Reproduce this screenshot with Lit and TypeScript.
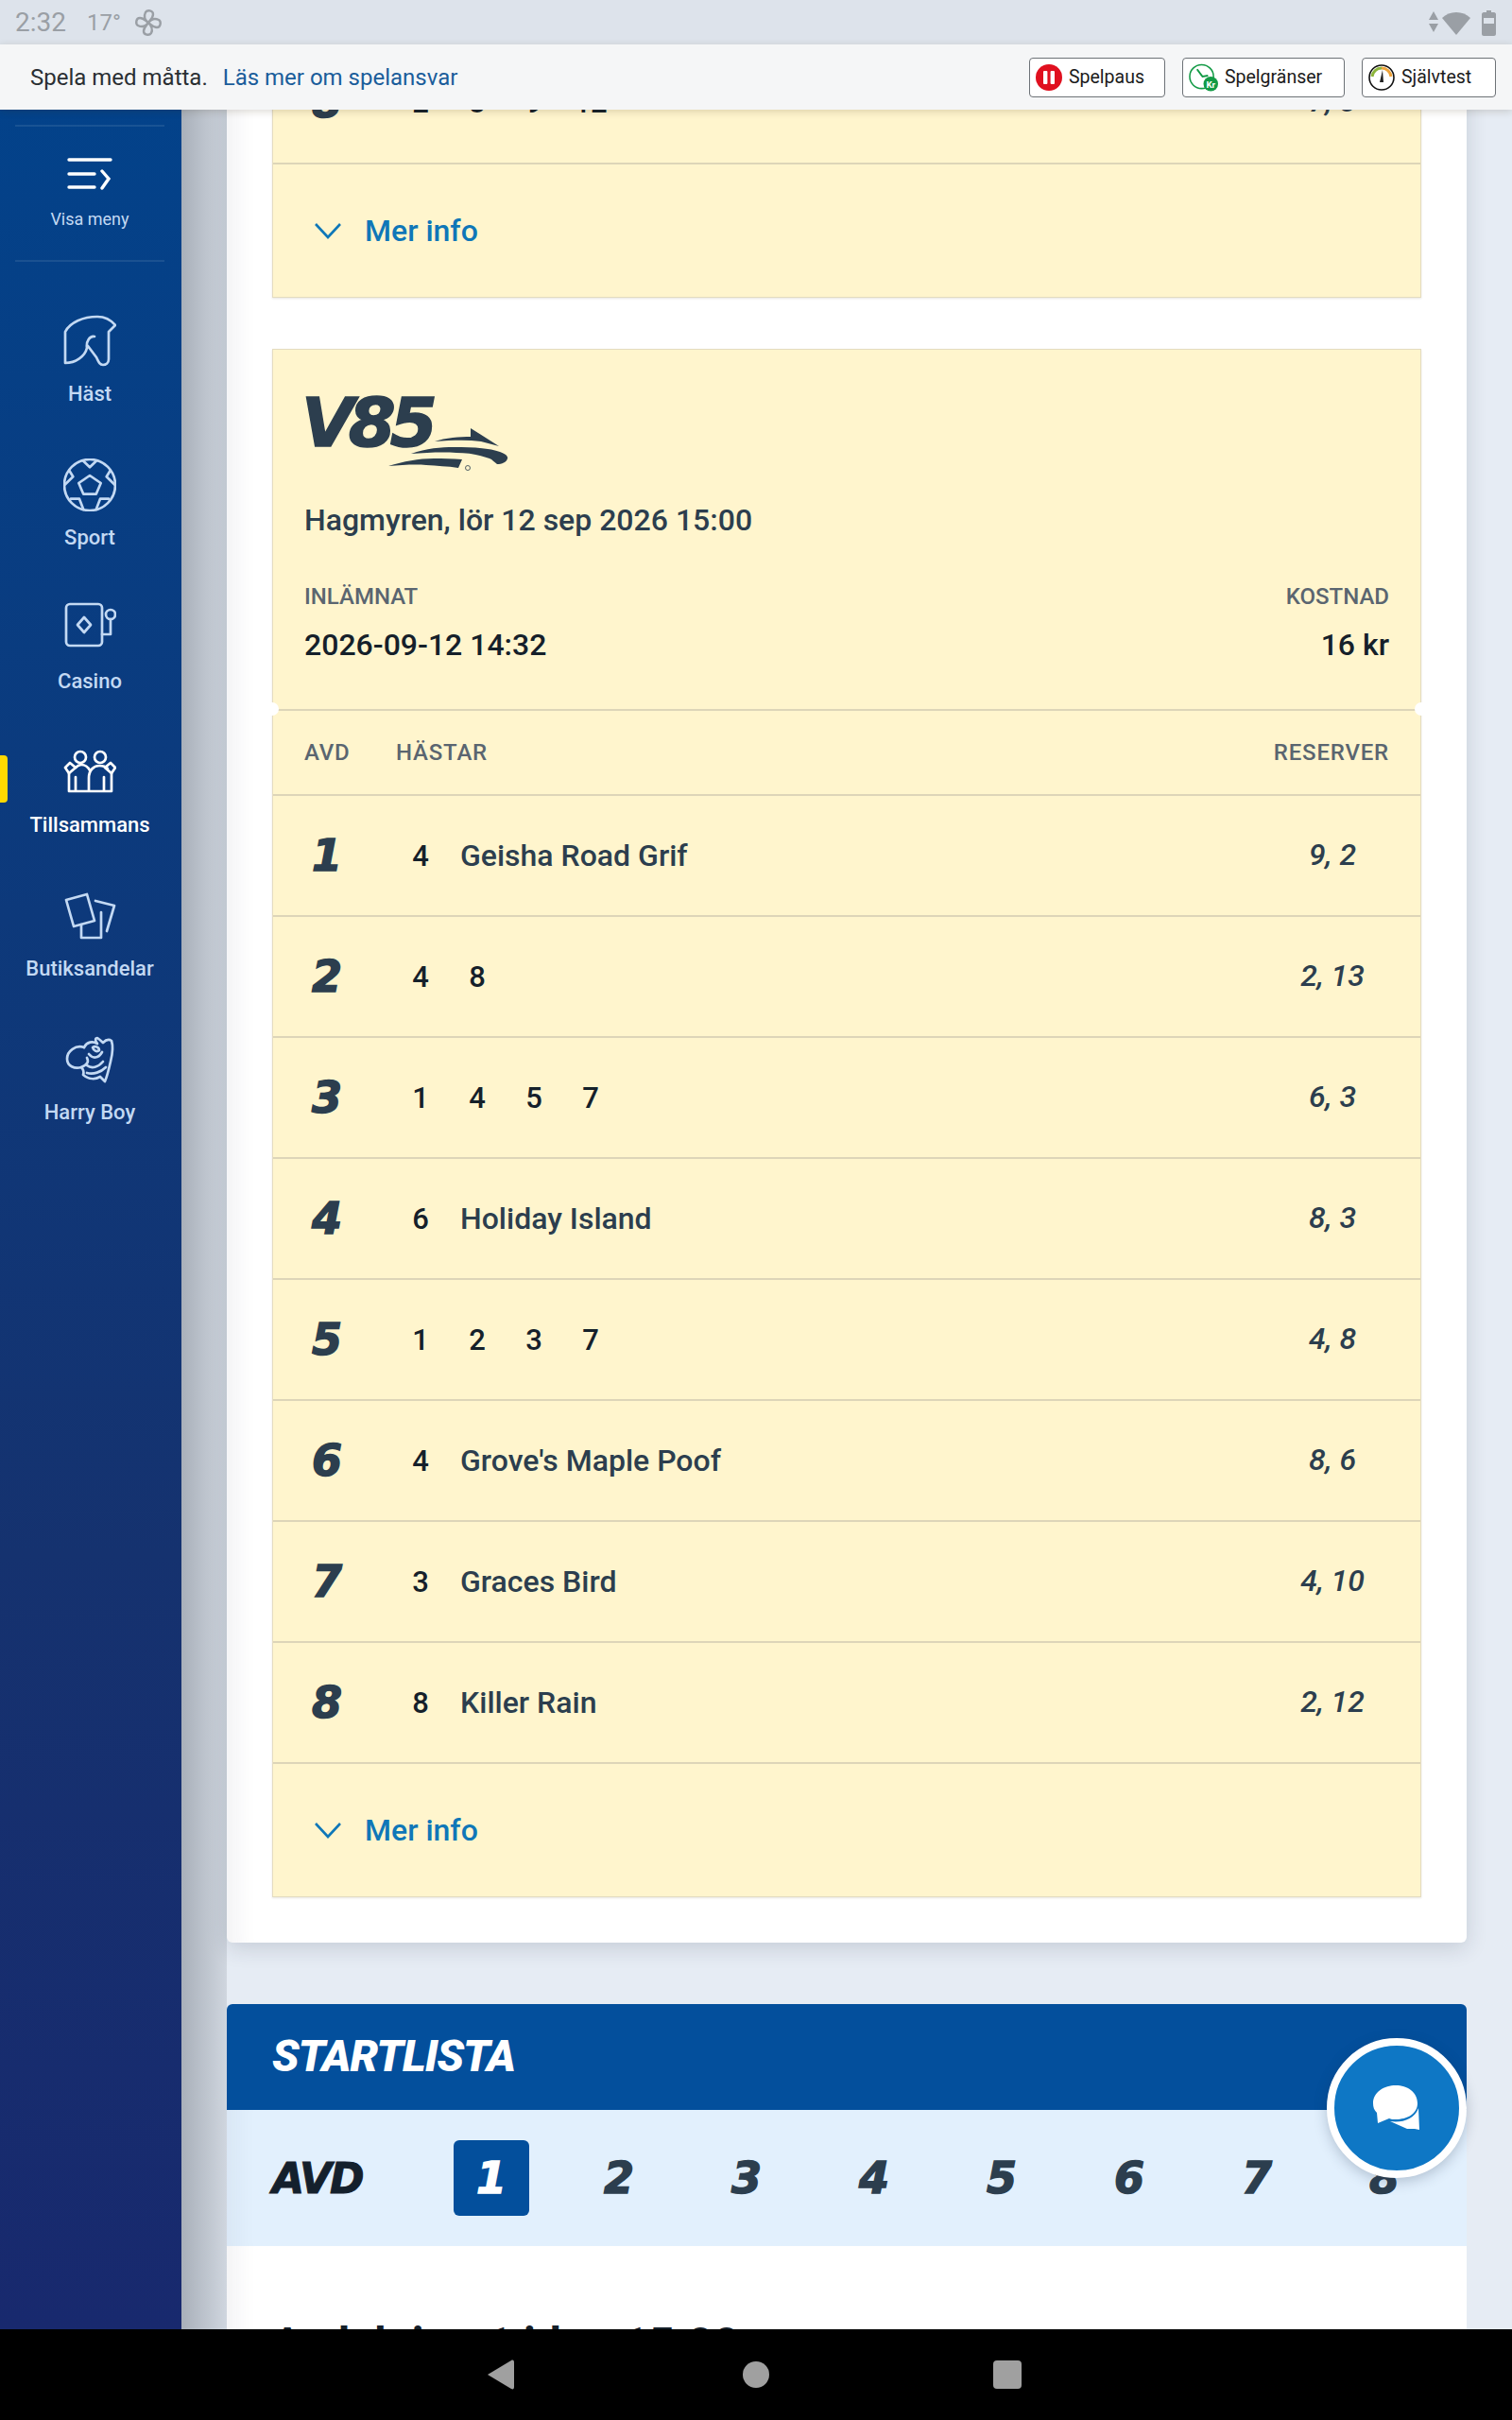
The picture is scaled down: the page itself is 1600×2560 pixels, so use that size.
import { LitElement, html, css, svg } from "lit";
import { customElement } from "lit/decorators.js";

type Row = { avd: number; nums: number[]; name: string; res: string };

const FIRST: Row[] = [{ avd: 8, nums: [2, 3, 9, 12], name: "", res: "7, 8" }];
const ROWS: Row[] = [
  { avd: 1, nums: [4], name: "Geisha Road Grif", res: "9, 2" },
  { avd: 2, nums: [4, 8], name: "", res: "2, 13" },
  { avd: 3, nums: [1, 4, 5, 7], name: "", res: "6, 3" },
  { avd: 4, nums: [6], name: "Holiday Island", res: "8, 3" },
  { avd: 5, nums: [1, 2, 3, 7], name: "", res: "4, 8" },
  { avd: 6, nums: [4], name: "Grove's Maple Poof", res: "8, 6" },
  { avd: 7, nums: [3], name: "Graces Bird", res: "4, 10" },
  { avd: 8, nums: [8], name: "Killer Rain", res: "2, 12" },
];

const ICONS: Record<string, unknown> = {
  hast: svg`<path d="M32 23C27 22 23 28 24 35C22 44 12 51 1 51V18C6 8 20 2 35 2C42 2 49 5 54 11L47 18V47C47 51 44 53 41 53C37 53 36 49 34 45L25 33"/>`,
  sport: svg`<circle cx="27" cy="28" r="27"/><path d="M27 18L38.7 26L33.7 37.7H20.3L15.3 26Z"/><path d="M20.3 2.7L27 9.3L33.7 2.7M5.3 12.7L9.3 19.3L0.6 27.7M48.7 12.7L44.7 19.3L53.4 27.7M7 42.7H16L20.3 54M47 42.7H38L33.7 54"/>`,
  casino: svg`<rect x="2" y="2" width="38" height="44" rx="4"/><path d="M21 16L28 24L21 32L14 24Z"/><circle cx="49" cy="13" r="5"/><path d="M49 18V34H40"/>`,
  team: svg`<circle cx="17" cy="12" r="6"/><circle cx="38" cy="12" r="6"/><path d="M5 29L1 23L6 18L12 23ZM50 29L54 23L49 18L43 23Z"/><path d="M5 29V48H50V29M12 33V48M42 33V48M26 48V34C26 26 31 21 37 21C42 21 44 22 46 24M12 23C14 21 16 20 18 20C22 20 25 22 27 26"/>`,
  butik: svg`<path d="M2 11L24 5L32 33L10 39Z"/><path d="M33 12L53 17L45 44"/><path d="M39 24V51H18V37"/>`,
  harry: svg`<path d="M21 15C12 12 3 19 3 27C3 35 11 38 18 36C25 33 26 30 24 26"/><path d="M21 15C24 9 30 8 35 11C32 7 33 5 35 5C38 7 40 9 41 10C44 7 47 6 50 8C52 14 51 22 49 30C47 38 46 44 43 51L38 46C33 49 26 49 20 44C21 41 21 39 18 36"/><path d="M26 22C30 27 36 27 40 20M30 15C33 13 37 15 37 18C35 20 31 19 30 15Z"/><path d="M24 34C29 38 36 36 41 30M24 42C31 44 39 41 44 36"/>`,
};

@customElement("app-root")
export class AppRoot extends LitElement {
  static styles = css`
    :host {
      display: block;
      position: relative;
      width: 1600px;
      height: 2560px;
      overflow: hidden;
      font-family: Roboto, "Liberation Sans", sans-serif;
      background: #e6ecf4;
      color: #2c3e4e;
    }
    .page { display: flex; flex-direction: column; height: 2560px; }
    .status {
      height: 47px; flex: none; background: #dde3eb; color: #9a9fa5;
      display: flex; align-items: center; padding: 0 17px 0 16px; font-size: 28px;
    }
    .status .time { width: 76px; }
    .status .temp { font-size: 24px; width: 50px; }
    .status .spacer { flex: 1; }
    .resp {
      height: 69px; flex: none; background: #f5f6f7; display: flex; align-items: center;
      padding: 0 17px 0 32px; font-size: 24px; color: #2a2f33; position: relative; z-index: 5;
      box-shadow: 0 2px 8px rgba(60, 50, 20, 0.18);
    }
    .resp a { color: #1a5d9b; margin-left: 16px; }
    .resp .spacer { flex: 1; }
    .btn {
      height: 42px; box-sizing: border-box; border: 1px solid #6d7277; border-radius: 4px; background: #fff;
      display: flex; align-items: center; font-size: 19.5px; color: #1b1b1b; margin-left: 18px; padding-left: 6px;
    }
    .btn svg { flex: none; margin-right: 7px; }
    .w1 { width: 144px; }
    .w2 { width: 172px; }
    .w3 { width: 142px; }
    .main { flex: 1; display: flex; min-height: 0; overflow: hidden; }
    .side {
      width: 192px; flex: none; position: relative; z-index: 3; box-sizing: border-box; padding-right: 2px;
      background: linear-gradient(#03428a, #15326f 65%, #18296e);
      display: flex; flex-direction: column; align-items: center;
    }
    .side::after {
      content: ""; position: absolute; left: 100%; top: 0; bottom: 0; width: 48px;
      background: linear-gradient(90deg, rgba(10, 20, 35, 0.28), rgba(10, 20, 35, 0.1));
    }
    .hr { width: 158px; height: 2px; background: rgba(255, 255, 255, 0.09); flex: none; }
    .hr.top { margin-top: 16px; }
    .menu {
      height: 141px; flex: none; display: flex; flex-direction: column; align-items: center;
      color: #c3d9f3; font-size: 18px;
    }
    .menu svg { margin-top: 33px; margin-bottom: 20px; }
    .nav { padding-top: 44px; width: 100%; }
    .item {
      height: 152px; box-sizing: border-box; padding-top: 12px; position: relative;
      display: flex; flex-direction: column; align-items: center; color: #c3d9f3;
      font-size: 22px; font-weight: 500; line-height: 28px; gap: 14px;
    }
    .item.on { color: #fff; }
    .item svg { fill: none; stroke: currentColor; stroke-width: 2.7; stroke-linecap: round; stroke-linejoin: round; }
    .mark {
      position: absolute; left: 0; top: 22px; width: 8px; height: 50px;
      background: #ffd900; border-radius: 0 4px 4px 0;
    }
    .content { flex: 1; padding: 0 48px; min-width: 0; }
    .panel {
      margin-top: -73px; background: #fff; border-radius: 6px; padding: 0 48px 48px;
      box-shadow: 0 6px 22px rgba(30, 45, 70, 0.16), inset 34px 0 24px -24px rgba(30, 40, 60, 0.06);
      display: flex; flex-direction: column; gap: 54px;
    }
    .card {
      background: #fff5cd; border: 1px solid #e4dcc0; position: relative;
      box-shadow: 0 1px 2px rgba(90, 80, 40, 0.14);
    }
    .head { height: 380px; box-sizing: border-box; padding: 48px 33px 0; }
    .logo { display: flex; height: 80px; position: relative; }
    .wordmark {
      font-family: "DejaVu Sans", sans-serif; font-weight: 700; font-style: italic;
      font-size: 72px; line-height: 58px; letter-spacing: -6px; color: #2c3e4e; margin-left: -3px;
      -webkit-text-stroke: 1.5px #2c3e4e;
    }
    .horse { position: absolute; left: 89px; top: 35px; }
    .date { font-size: 32px; line-height: 40px; margin-top: 32px; font-weight: 500; }
    .meta { display: flex; justify-content: space-between; margin-top: 44px; }
    .meta .r { text-align: right; }
    .lab { font-size: 24px; line-height: 34px; color: #5a6570; font-weight: 500; }
    .val { font-size: 32px; line-height: 40px; color: #15202a; margin-top: 14px; font-weight: 500; }
    .notch {
      position: absolute; top: 373px; width: 14px; height: 14px; border-radius: 50%; background: #fff;
    }
    .notch.l { left: -8px; }
    .notch.r { right: -8px; }
    .cols {
      height: 90px; border-top: 2px solid #ddd5b8; box-sizing: border-box; display: flex; align-items: center;
      padding: 0 33px; font-size: 24px; color: #5a6570; font-weight: 500; letter-spacing: 0.8px;
    }
    .cols .a { width: 97px; }
    .cols .b { flex: 1; }
    .row {
      height: 128px; box-sizing: border-box; border-top: 2px solid #ddd5b8; display: flex; align-items: center;
      padding: 0 33px;
    }
    .row.noline { border-top: none; }
    .avd {
      width: 93px; flex: none; font-family: "DejaVu Sans", sans-serif; font-weight: 700; font-style: italic;
      font-size: 46px; color: #2c3e4e; text-indent: 8px; -webkit-text-stroke: 1.5px #2c3e4e;
    }
    .nums { display: flex; flex: none; }
    .num { width: 60px; text-align: center; font-size: 31px; font-weight: 500; color: #15202a; }
    .name { font-size: 32px; margin-left: 12px; flex: 1; font-weight: 500; }
    .fill { flex: 1; }
    .res {
      width: 120px; flex: none; text-align: center; font-style: italic; font-size: 32px; font-weight: 500;
      color: #2c3e4e; padding-bottom: 2px;
    }
    .more {
      height: 142px; box-sizing: border-box; border-top: 2px solid #ddd5b8; display: flex; align-items: center;
      padding: 0 0 0 43px; color: #0f77b8; font-size: 32px; font-weight: 500; gap: 24px;
    }
    .start { margin-top: 65px; }
    .sthead {
      height: 112px; box-sizing: border-box; background: #034f9c; border-radius: 6px 6px 0 0; display: flex; align-items: center;
      padding: 0 0 4px 48px; color: #fff; font-weight: 900; font-style: italic; font-size: 47px; letter-spacing: -1px;
    }
    .tabs {
      height: 144px; background: #e2f0fd; display: flex; align-items: center; padding-left: 48px; position: relative;
      font-family: "DejaVu Sans", sans-serif; font-weight: 700; font-style: italic; color: #2c3e4e;
      box-shadow: inset 34px 0 24px -24px rgba(30, 40, 60, 0.05);
    }
    .tabs .t { font-size: 44px; color: #14202c; width: 192px; letter-spacing: -2px; flex: none; -webkit-text-stroke: 1px #14202c; }
    .tab {
      width: 80px; height: 80px; flex: none; margin-right: 55px; display: flex; align-items: center; justify-content: center;
      font-size: 46px; border-radius: 6px; -webkit-text-stroke: 1.5px currentColor;
    }
    .tab.on { background: #034f9c; color: #fff; }
    .body {
      background: #fff; height: 200px; box-sizing: border-box; padding: 75px 48px 0; font-size: 48px; font-weight: 700; color: #15202a;
      box-shadow: inset 34px 0 24px -24px rgba(30, 40, 60, 0.06);
    }
    .sys {
      height: 96px; flex: none; background: #000; position: relative; z-index: 6;
      display: flex; justify-content: center; align-items: center; gap: 0;
    }
    .sys svg { display: block; }
    .chat {
      position: absolute; z-index: 4; left: 1404px; top: 2156px; width: 148px; height: 148px; box-sizing: border-box;
      border-radius: 50%; background: #0e77c5; border: 8px solid #fff; box-shadow: 0 4px 14px rgba(30, 50, 80, 0.25);
      display: flex; align-items: center; justify-content: center;
    }
  `;

  private renderRow(r: Row, noline = false) {
    return html`<div class="row ${noline ? "noline" : ""}">
      <div class="avd">${r.avd}</div>
      <div class="nums">${r.nums.map((n) => html`<div class="num">${n}</div>`)}</div>
      ${r.name ? html`<div class="name">${r.name}</div>` : html`<div class="fill"></div>`}
      <div class="res">${r.res}</div>
    </div>`;
  }

  private more() {
    return html`<div class="more">
      <svg width="30" height="18" viewBox="0 0 30 18" fill="none" stroke="#0f77b8" stroke-width="2.6"><path d="M2 2L15 16L28 2"/></svg>
      <span>Mer info</span>
    </div>`;
  }

  private navItem(icon: string, label: string, on = false) {
    return html`<div class="item ${on ? "on" : ""}">
      ${on ? html`<div class="mark"></div>` : ""}
      <svg width="56" height="56" viewBox="-1 0 56 56">${ICONS[icon]}</svg>
      <span>${label}</span>
    </div>`;
  }

  render() {
    return html`<div class="page">
      <div class="status">
        <span class="time">2:32</span><span class="temp">17°</span>
        <svg width="30" height="30" viewBox="0 0 30 30" fill="none" stroke="#9a9fa5" stroke-width="2.4">
          <path d="M15 15C11 12 10 8 12 4C14 1 20 2 20 6C20 10 17 12 15 15C18 11 22 10 26 12C29 14 28 20 24 20C20 20 18 17 15 15C18 18 20 22 18 26C16 29 10 28 10 24C10 20 13 18 15 15C12 19 8 20 4 18C1 16 2 10 6 10C10 10 12 13 15 15Z"/>
        </svg>
        <span class="spacer"></span>
        <svg width="71" height="28" viewBox="0 0 71 28" fill="#9a9fa5">
          <path d="M5 2L10 11H0ZM5 24L0 15H10Z"/>
          <path d="M14 9C18 5 23 3 29 3C35 3 40 5 44 9L29 27Z"/>
          <path d="M58 3H61V1H66V3H69C70 3 71 4 71 5V26C71 27 70 28 69 28H58C57 28 56 27 56 26V5C56 4 57 3 58 3Z"/>
          <rect x="58" y="9" width="11" height="6" fill="#dde3eb"/>
        </svg>
      </div>
      <div class="resp">
        <span>Spela med måtta.</span><a>Läs mer om spelansvar</a>
        <span class="spacer"></span>
        <div class="btn w1">
          <svg width="28" height="28" viewBox="0 0 28 28"><circle cx="14" cy="14" r="14" fill="#e0101f"/><rect x="8" y="7" width="4.4" height="14" rx="1" fill="#fff"/><rect x="15.6" y="7" width="4.4" height="14" rx="1" fill="#fff"/></svg>
          Spelpaus
        </div>
        <div class="btn w2">
          <svg width="31" height="30" viewBox="0 0 32 30"><circle cx="14" cy="14" r="13" fill="#fff" stroke="#129a45" stroke-width="1.6"/><path d="M9 6L15 14L21 13" fill="none" stroke="#129a45" stroke-width="2"/><circle cx="24" cy="22" r="8" fill="#129a45"/><text x="24" y="26" font-size="10" font-weight="700" fill="#fff" text-anchor="middle">Kr</text></svg>
          Spelgränser
        </div>
        <div class="btn w3">
          <svg width="28" height="30" viewBox="0 0 28 30"><circle cx="14" cy="15" r="13" fill="#fff" stroke="#111" stroke-width="1.6"/><path d="M4 14A10 10 0 0 1 14 5" fill="none" stroke="#8cb43c" stroke-width="3"/><path d="M14 5A10 10 0 0 1 24 14" fill="none" stroke="#eea33a" stroke-width="3"/><path d="M12 20L15 7L16 20Z" fill="#222"/></svg>
          Självtest
        </div>
      </div>
      <div class="main">
        <div class="side">
          <div class="hr top"></div>
          <div class="menu">
            <svg width="48" height="34" viewBox="0 0 48 34" fill="none" stroke="#fff" stroke-width="3.4" stroke-linecap="round"><path d="M2 2H46M2 17H29M2 31H29M37 14L44 22L37 32"/></svg>
            <span>Visa meny</span>
          </div>
          <div class="hr"></div>
          <div class="nav">
            ${this.navItem("hast", "Häst")}
            ${this.navItem("sport", "Sport")}
            ${this.navItem("casino", "Casino")}
            ${this.navItem("team", "Tillsammans", true)}
            ${this.navItem("butik", "Butiksandelar")}
            ${this.navItem("harry", "Harry Boy")}
          </div>
        </div>
        <div class="content">
          <div class="panel">
            <div class="card first">
              ${FIRST.map((r) => this.renderRow(r, true))}
              ${this.more()}
            </div>
            <div class="card">
              <div class="head">
                <div class="logo">
                  <span class="wordmark">V85</span>
                  <svg class="horse" width="128" height="46" viewBox="0 0 128 46" fill="#2c3e4e">
                    <path d="M49 14C60 10 76 9 87 9L87 0L117 19L98 14C82 12 66 13 49 14Z"/>
                    <path d="M24 27C40 21 56 20 69 20C90 20 108 21 118 25C124 27 127 30 126 32C125 36 120 38 115 38C112 36 110 33 107 32C96 28 84 26 72 26C56 25 40 26 24 27Z"/>
                    <path d="M0 40C16 35 32 32 48 32C58 32 68 32 78 33L74 42C62 40 52 40 40 39C28 38 14 39 0 40Z"/>
                    <circle cx="84" cy="42" r="2.5" fill="none" stroke="#2c3e4e" stroke-width="0.8"/>
                  </svg>
                </div>
                <div class="date">Hagmyren, lör 12 sep 2026 15:00</div>
                <div class="meta">
                  <div><div class="lab">INLÄMNAT</div><div class="val">2026-09-12 14:32</div></div>
                  <div class="r"><div class="lab">KOSTNAD</div><div class="val">16 kr</div></div>
                </div>
              </div>
              <div class="notch l"></div><div class="notch r"></div>
              <div class="cols"><span class="a">AVD</span><span class="b">HÄSTAR</span><span>RESERVER</span></div>
              ${ROWS.map((r) => this.renderRow(r))}
              ${this.more()}
            </div>
          </div>
          <div class="start">
            <div class="sthead">STARTLISTA</div>
            <div class="tabs">
              <span class="t">AVD</span>
              ${[1, 2, 3, 4, 5, 6, 7, 8].map((n) => html`<div class="tab ${n === 1 ? "on" : ""}">${n}</div>`)}
            </div>
            <div class="body">Avdelning 1 idag 15:00</div>
          </div>
        </div>
      </div>
      <div class="sys">
        <svg width="1600" height="96" viewBox="0 0 1600 96" fill="#a0a0a0">
          <path d="M516 48L541 33C543 32 544 33 544 35V61C544 63 543 64 541 63Z"/>
          <circle cx="800" cy="48" r="14"/>
          <rect x="1051" y="33" width="30" height="30" rx="4"/>
        </svg>
      </div>
    </div>
    <div class="chat">
      <svg width="50" height="50" viewBox="0 0 50 50" fill="#fff">
        <path d="M24 1C36 1 47 8 47 20C47 31 36 37 24 37C21 37 19 37 17 36L5 41L4 30C1 27 0 24 0 20C0 8 12 1 24 1Z"/>
        <path d="M48 25L49 48L44 47L36 47L18 39C30 41 44 37 48 25Z"/>
      </svg>
    </div>`;
  }
}
